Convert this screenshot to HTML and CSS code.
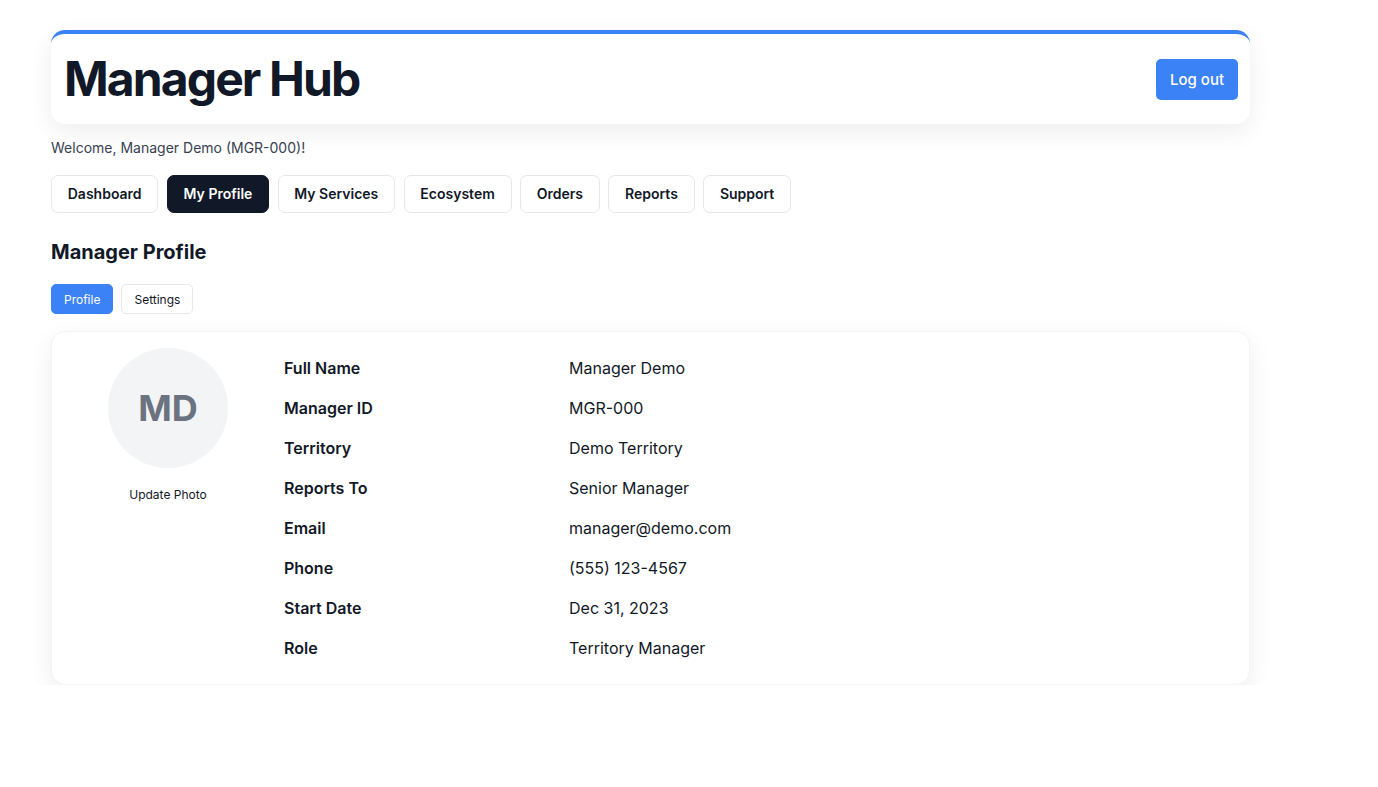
FILE: index.html
```html
<!DOCTYPE html>
<html lang="en">
<head>
<meta charset="utf-8">
<title>Manager Hub</title>
<link rel="stylesheet" href="styles.css">
</head>
<body>
<div class="page">
  <header class="hub-header">
    <h1 class="hub-title">Manager Hub</h1>
    <button class="logout-btn">Log out</button>
  </header>
  <p class="welcome">Welcome, Manager Demo (MGR-000)!</p>
  <nav class="main-nav">
    <button class="nav-btn">Dashboard</button>
    <button class="nav-btn active">My Profile</button>
    <button class="nav-btn">My Services</button>
    <button class="nav-btn">Ecosystem</button>
    <button class="nav-btn">Orders</button>
    <button class="nav-btn">Reports</button>
    <button class="nav-btn">Support</button>
  </nav>
  <h2 class="section-title">Manager Profile</h2>
  <div class="sub-tabs">
    <button class="sub-tab active">Profile</button>
    <button class="sub-tab">Settings</button>
  </div>
  <section class="profile-card">
    <div class="avatar-col">
      <div class="avatar">MD</div>
      <div class="update-photo">Update Photo</div>
    </div>
    <dl class="details">
      <dt>Full Name</dt><dd>Manager Demo</dd>
      <dt>Manager ID</dt><dd>MGR-000</dd>
      <dt>Territory</dt><dd>Demo Territory</dd>
      <dt>Reports To</dt><dd>Senior Manager</dd>
      <dt>Email</dt><dd>manager@demo.com</dd>
      <dt>Phone</dt><dd>(555) 123-4567</dd>
      <dt>Start Date</dt><dd>Dec 31, 2023</dd>
      <dt>Role</dt><dd>Territory Manager</dd>
    </dl>
  </section>
</div>
</body>
</html>
```
FILE: styles.css
```css
* { box-sizing: border-box; }
html, body { margin: 0; padding: 0; background: #ffffff; }
body {
  font-family: Inter, "Noto Sans", "Liberation Sans", sans-serif;
  color: #111827;
}
.page {
  width: 1199px;
  margin-left: 51px;
  padding-top: 30px;
}
.hub-header {
  display: flex;
  align-items: center;
  justify-content: space-between;
  background: #fff;
  border-top: 4px solid #3b82f6;
  border-radius: 14px;
  padding: 16px 12px;
  box-shadow: 0 8px 24px rgba(0,0,0,0.07);
}
.hub-title {
  margin: 0 0 0 1px;
  font-size: 48px;
  font-weight: 700;
  line-height: 58px;
  color: #111827;
  letter-spacing: -1.9px;
}
.logout-btn {
  font-family: inherit;
  font-size: 15px;
  font-weight: 500;
  color: #fff;
  background: #3b82f6;
  border: none;
  border-radius: 5px;
  height: 41px;
  width: 82px;
  padding: 0;
}
.welcome {
  margin: 14px 0 0;
  font-size: 14px;
  line-height: 20px;
  color: #374151;
}
.main-nav {
  display: flex;
  gap: 8.5px;
  margin-top: 16.5px;
}
.nav-btn {
  font-family: inherit;
  font-size: 14px;
  font-weight: 600;
  color: #111827;
  background: #fff;
  border: 1px solid #e5e7eb;
  border-radius: 7px;
  height: 38px;
  padding: 0 15.75px;
}
.nav-btn.active {
  background: #111827;
  border-color: #111827;
  color: #fff;
}
.section-title {
  margin: 25.5px 0 0;
  font-size: 20px;
  font-weight: 700;
  line-height: 28px;
  color: #111827;
}
.sub-tabs {
  display: flex;
  gap: 8px;
  margin-top: 18px;
}
.sub-tab {
  font-family: inherit;
  font-size: 12px;
  font-weight: 400;
  color: #111827;
  background: #fff;
  border: 1px solid #e5e7eb;
  border-radius: 5px;
  height: 30px;
  padding: 0 12px;
}
.sub-tab.active {
  background: #3b82f6;
  border-color: #3b82f6;
  color: #fff;
}
.profile-card {
  display: flex;
  gap: 16px;
  margin-top: 17px;
  background: #fff;
  border: 1px solid #f3f4f6;
  border-radius: 14px;
  padding: 16px;
  box-shadow: 0 8px 24px rgba(0,0,0,0.07);
}
.avatar-col {
  width: 200px;
  flex: none;
  display: flex;
  flex-direction: column;
  align-items: center;
}
.avatar {
  width: 120px;
  height: 120px;
  border-radius: 50%;
  background: #f3f4f6;
  color: #6b7280;
  font-size: 36px;
  font-weight: 700;
  display: flex;
  align-items: center;
  justify-content: center;
}
.update-photo {
  margin-top: 19px;
  font-size: 12px;
  line-height: 16px;
  color: #111827;
}
.details {
  flex: 1;
  margin: 0;
  display: grid;
  grid-template-columns: 285px 1fr;
}
.details dt, .details dd {
  margin: 0;
  padding: 8px 0;
  font-size: 16px;
  line-height: 24px;
}
.details dt { font-weight: 600; color: #111827; }
.details dd { font-weight: 400; color: #111827; }
```
